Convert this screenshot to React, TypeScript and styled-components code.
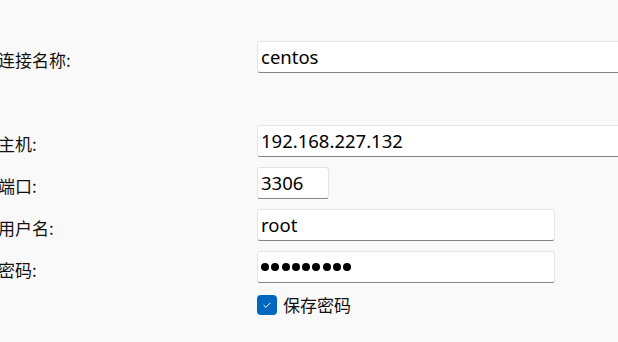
import React from "react";
import styled, { createGlobalStyle } from "styled-components";

const GlobalStyle = createGlobalStyle`
  html, body {
    margin: 0;
    padding: 0;
    background: #f9f9f9;
    overflow: hidden;
  }
  body {
    font-family: "Noto Sans", "Noto Sans CJK SC", sans-serif;
    color: #1a1a1a;
  }
`;

const Page = styled.div`
  width: 618px;
  height: 342px;
  overflow: hidden;
  padding-top: 41px;
  box-sizing: border-box;
`;

const Form = styled.div`
  display: grid;
  grid-template-columns: 259px 400px;
  grid-auto-rows: 32px;
  row-gap: 10px;
  margin-left: -2px;
`;

const Label = styled.div`
  font-family: "Noto Sans CJK SC", sans-serif;
  font-size: 17px;
  color: #111;
  display: flex;
  align-items: center;
  padding-top: 5px;
  box-sizing: border-box;
`;

const Spacer = styled.div`
  grid-column: 1 / span 2;
`;

const Field = styled.div<{ $width: number }>`
  width: ${(p) => p.$width}px;
  height: 32px;
  box-sizing: border-box;
  background: #ffffff;
  border: 1px solid #e5e5e5;
  border-bottom: 1px solid #868686;
  border-radius: 3px;
  display: flex;
  align-items: center;
  padding: 0 0 1px 3px;
  font-family: "Noto Sans", "Noto Sans CJK SC", sans-serif;
  font-size: 18.5px;
  color: #000;
`;

const Dots = styled.div`
  display: flex;
  gap: 2.3px;
`;

const Dot = styled.span`
  width: 8px;
  height: 8px;
  border-radius: 50%;
  background: #000;
`;

const CheckRow = styled.label`
  display: flex;
  align-items: center;
  gap: 6px;
  align-self: start;
  margin-top: -1px;
  font-family: "Noto Sans CJK SC", sans-serif;
  font-size: 17px;
  color: #111;
`;

const Box = styled.span`
  width: 20px;
  height: 20px;
  border-radius: 4px;
  background: #0067c0;
  display: flex;
  align-items: center;
  justify-content: center;
`;

export default function App() {
  return (
    <Page>
      <GlobalStyle />
      <Form>
        <Label>连接名称:</Label>
        <Field $width={400}>centos</Field>
        <Spacer />
        <Label>主机:</Label>
        <Field $width={400}>192.168.227.132</Field>
        <Label>端口:</Label>
        <Field $width={72}>3306</Field>
        <Label>用户名:</Label>
        <Field $width={298}>root</Field>
        <Label>密码:</Label>
        <Field $width={298}>
          <Dots>
            {Array.from({ length: 9 }).map((_, i) => (
              <Dot key={i} />
            ))}
          </Dots>
        </Field>
        <div />
        <CheckRow>
          <Box>
            <svg width="12" height="12" viewBox="0 0 12 12">
              <path d="M2.6 6.2 L4.9 8.3 L9.4 3.8" fill="none" stroke="#fff" strokeWidth="1" />
            </svg>
          </Box>
          保存密码
        </CheckRow>
      </Form>
    </Page>
  );
}
